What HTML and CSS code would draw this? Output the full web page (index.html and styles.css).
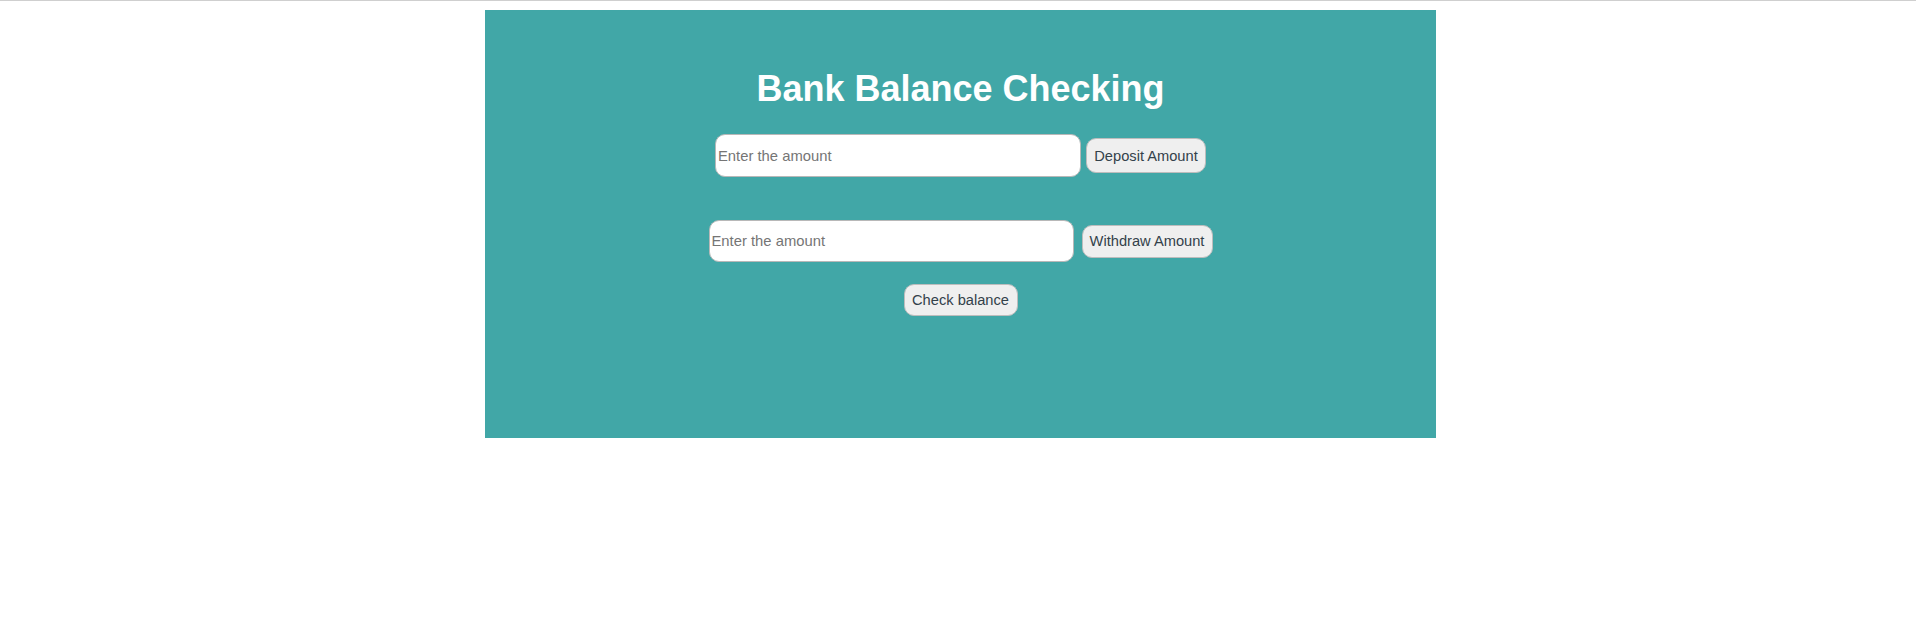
FILE: index.html
```html
<!DOCTYPE html>
<html>
<head>
<meta charset="utf-8">
<title>Bank Balance Checking</title>
<link rel="stylesheet" href="styles.css">
</head>
<body>
<div class="topline"></div>
<div class="card">
  <h1 class="title">Bank Balance Checking</h1>
  <div class="row row-deposit">
    <input class="amount amount-deposit" type="text" placeholder="Enter the amount">
    <button class="btn btn-deposit">Deposit Amount</button>
  </div>
  <div class="row row-withdraw">
    <input class="amount amount-withdraw" type="text" placeholder="Enter the amount">
    <button class="btn btn-withdraw">Withdraw Amount</button>
  </div>
  <button class="btn btn-check">Check balance</button>
</div>
</body>
</html>
```

FILE: styles.css
```css
html, body {
  margin: 0;
  padding: 0;
  background: #ffffff;
  font-family: "Liberation Sans", Arial, sans-serif;
}

.topline {
  height: 1px;
  background: #cfcfcf;
}

.card {
  box-sizing: border-box;
  width: 951px;
  height: 428px;
  margin: 9px 0 0 485px;
  background: #41a7a7;
  display: flex;
  flex-direction: column;
  align-items: center;
  padding-top: 59px;
}

.title {
  margin: 0;
  font-size: 36px;
  line-height: 40px;
  font-weight: bold;
  color: #ffffff;
  font-family: "Liberation Sans", Arial, sans-serif;
}

.row {
  display: flex;
  align-items: center;
}

.row-deposit {
  margin-top: 25px;
  gap: 5px;
}

.row-withdraw {
  margin-top: 43px;
  gap: 8px;
}

.amount {
  box-sizing: border-box;
  width: 366px;
  height: 43px;
  border: 1px solid #b8b8b8;
  border-radius: 10px;
  background: #ffffff;
  padding: 0 2px;
  font-family: "Liberation Sans", Arial, sans-serif;
  font-size: 14.8px;
  color: #333333;
  outline: none;
}

.amount::placeholder {
  color: #757575;
}

.amount-withdraw {
  width: 365px;
  height: 42px;
}

.btn {
  box-sizing: border-box;
  border: 1px solid #bdbdbd;
  border-radius: 10px;
  background: #efefef;
  color: #33414a;
  font-family: "Liberation Sans", Arial, sans-serif;
  font-size: 14.67px;
  padding: 0 7px;
  cursor: pointer;
}

.btn-deposit {
  width: 120px;
  height: 35px;
}

.btn-withdraw {
  width: 131px;
  height: 33px;
}

.btn-check {
  margin-top: 22px;
  width: 114px;
  height: 32px;
}
```
